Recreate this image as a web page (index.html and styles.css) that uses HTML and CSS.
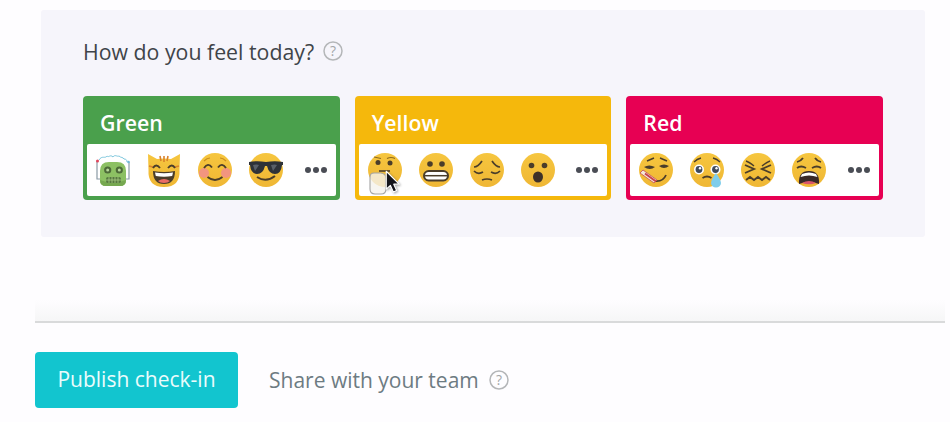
FILE: index.html
```html
<!DOCTYPE html>
<html lang="en">
<head>
<meta charset="utf-8">
<title>Check-in</title>
<link rel="stylesheet" href="styles.css">
</head>
<body>
<svg class="defs" aria-hidden="true"><defs><linearGradient id="face" x1="0" y1="0" x2="0" y2="1"><stop offset="0" stop-color="#f6c63f"/><stop offset="1" stop-color="#efb734"/></linearGradient></defs></svg>
<main class="page">
  <section class="panel">
    <div class="question">
      <span>How do you feel today?</span>
      <svg class="help" viewBox="0 0 20 20"><circle cx="10" cy="10" r="9"/><text x="10" y="15">?</text></svg>
    </div>
    <div class="cards">
      <article class="card green">
        <h2 class="card-title">Green</h2>
        <div class="emoji-row">
          <svg class="emoji" viewBox="0 0 34 34">
            <path d="M3 7C6 2 9 6 11 3c2 2 3-2 6 1 2-3 4 0 6-1 2 2 4 1 5 3 2 0 3 1 3 3" fill="none" stroke="#7cc7dd" stroke-width="1"/>
            <path d="M1 8v18h3M33 9v17h-3" fill="none" stroke="#8a9aa5" stroke-width="1.200"/>
            <circle cx="1.500" cy="8" r="1.500" fill="#e0455c"/><circle cx="32.500" cy="9" r="1.300" fill="#6fb8d8"/>
            <path d="M13 9h8q9 0 9 9v9q0 6-6 6H10q-6 0-6-6v-9q0-9 9-9z" fill="#8cc063"/>
            <path d="M4 27q13 5 26 0 0 6-6 6H10q-6 0-6-6z" fill="#76a850"/>
            <circle cx="11.700" cy="17" r="3.600" fill="#4d6a39"/><circle cx="11.700" cy="17" r="1.500" fill="#b8d79b"/>
            <circle cx="23.300" cy="17" r="3.600" fill="#4d6a39"/><circle cx="23.300" cy="17" r="1.500" fill="#b8d79b"/>
            <rect x="10" y="24" width="15" height="6" rx="2" fill="#56793f"/>
            <path d="M13 24v6M16 24v6M19 24v6M22 24v6M10 27h15" stroke="#a9cd86" stroke-width=".8"/>
          </svg>
          <svg class="emoji" viewBox="0 0 34 34">
            <path d="M1 1l9 5q7-1 14 0l9-5-.5 16q1 17-15.500 17T1.500 17z" fill="url(#face)"/>
            <path d="M13 3l1 5M17 3v6M21 3l-1 5M2 13l4 1M32 13l-4 1" stroke="#d9822b" stroke-width="1.600"/>
            <path d="M6 15q3-5 7 0M21 15q4-5 7 0" fill="none" stroke="#4a3d2a" stroke-width="1.900"/>
            <path d="M6 18q11 2 22 0 0 13-11 13T6 18z" fill="#4a3d2a"/>
            <path d="M8 19.500q9 1.500 18 0l-.8 3.500q-8.200 1.500-16.400 0z" fill="#fff"/>
            <path d="M11 28q6-4 12 0-2 2-6 2t-6-2z" fill="#ea6c63"/>
          </svg>
          <svg class="emoji" viewBox="0 0 34 34">
            <circle cx="17" cy="17" r="17" fill="url(#face)"/>
            <circle cx="6" cy="20" r="5" fill="#f2957f"/><circle cx="28" cy="20" r="5" fill="#f2957f"/>
            <path d="M6 15q4-6 8-.5M20 14.500q4-5.500 8 .5M9.500 24q7.500 6 15 0" fill="none" stroke="#4a3d2a" stroke-width="1.900"/>
            <path d="M6 8q3-3 6-3M22 5q3 0 6 3" fill="none" stroke="#c98e1f" stroke-width="1.100"/>
          </svg>
          <svg class="emoji" viewBox="0 0 34 34">
            <circle cx="17" cy="17" r="17" fill="url(#face)"/>
            <path d="M0 9q8-1.500 17 0 9-1.500 17 0v3h-1q-1 9-7 9-6 0-8-8h-2q-2 8-8 8-6 0-7-9H0z" fill="#2e3238"/>
            <path d="M4 12q4-1 6 0l-4 6zM22 12q4-1 6 0l-4 6z" fill="#5a6068"/>
            <path d="M8 24q9 6 18-1" fill="none" stroke="#4a3d2a" stroke-width="2"/>
          </svg>
          <div class="dots"><i></i><i></i><i></i></div>
        </div>
      </article>
      <article class="card yellow">
        <h2 class="card-title">Yellow</h2>
        <div class="emoji-row">
          <svg class="emoji" viewBox="0 0 34 34">
            <circle cx="17" cy="17" r="17" fill="url(#face)"/>
            <circle cx="10" cy="9.500" r="2.500" fill="#4a3d2a"/><circle cx="22" cy="10" r="2.500" fill="#4a3d2a"/>
            <path d="M6 4l7 1.500M19 5.500q4-2 8 0" fill="none" stroke="#8c6a20" stroke-width="1.200"/>
            <path d="M11 18h11" stroke="#4a3d2a" stroke-width="1.600"/>
            <path d="M2 24q0-4 4-4h7q5 1 5 5v11q0 5-5 5H7q-5 0-5-5z" fill="#f5f3ee" fill-opacity=".8" stroke="#a3a3a3" stroke-width="1.100"/>
          </svg>
          <svg class="emoji" viewBox="0 0 34 34">
            <circle cx="17" cy="17" r="17" fill="url(#face)"/>
            <circle cx="11" cy="11" r="2.800" fill="#4a3d2a"/><circle cx="23" cy="11" r="2.800" fill="#4a3d2a"/>
            <rect x="5" y="18" width="24" height="9.500" rx="4.700" fill="#fff" stroke="#4a3d2a" stroke-width="2"/>
            <path d="M6 22.700h22" stroke="#4a3d2a" stroke-width="1.500"/>
          </svg>
          <svg class="emoji" viewBox="0 0 34 34">
            <circle cx="17" cy="17" r="17" fill="url(#face)"/>
            <path d="M4 14q4 0 8-6M30 14q-4 0-8-6M4 18q4 4 9 1M21 19q5 3 9-1M12 27q5-2 10 0" fill="none" stroke="#4a3d2a" stroke-width="1.700"/>
          </svg>
          <svg class="emoji" viewBox="0 0 34 34">
            <circle cx="17" cy="17" r="17" fill="url(#face)"/>
            <circle cx="10.500" cy="12.500" r="2.800" fill="#4a3d2a"/><circle cx="23.500" cy="12.500" r="2.800" fill="#4a3d2a"/>
            <ellipse cx="17" cy="24" rx="5" ry="5.500" fill="#3e3128"/>
          </svg>
          <div class="dots"><i></i><i></i><i></i></div>
        </div>
      </article>
      <article class="card red">
        <h2 class="card-title">Red</h2>
        <div class="emoji-row">
          <svg class="emoji" viewBox="0 0 34 34">
            <circle cx="17" cy="17" r="17" fill="url(#face)"/>
            <path d="M8 8l7-3M21 5l7 3" fill="none" stroke="#4a3d2a" stroke-width="1.500"/>
            <path d="M5 14q5-3 11 0-5 4-11 0zM20 13q5-3 10 0-5 4-10 0z" fill="#4a3d2a"/>
            <path d="M16 28q8 1 11-6" fill="none" stroke="#4a3d2a" stroke-width="1.800"/>
            <path d="M1 20l3-3 14 10-3 3z" fill="#f4e8d8" stroke="#c85c58" stroke-width=".9"/>
            <path d="M6 20.500l11 8" stroke="#c83f4d" stroke-width="2"/>
          </svg>
          <svg class="emoji" viewBox="0 0 34 34">
            <circle cx="17" cy="17" r="17" fill="url(#face)"/>
            <path d="M4 9q3-3 7-4M23 5q4 1 7 4" fill="none" stroke="#4a3d2a" stroke-width="1.400"/>
            <circle cx="9" cy="16.500" r="5" fill="#fff"/><circle cx="25.500" cy="16.500" r="5" fill="#fff"/>
            <circle cx="9" cy="16.500" r="3.400" fill="#3f4a5c"/><circle cx="25.500" cy="16.500" r="3.400" fill="#3f4a5c"/>
            <circle cx="10" cy="15.300" r="1.200" fill="#fff"/><circle cx="26.500" cy="15.300" r="1.200" fill="#fff"/>
            <path d="M12.500 25q4.500-3 9 0" fill="none" stroke="#4a3d2a" stroke-width="1.800"/>
            <path d="M26 20q5 7 5 10a5 4.500 0 0 1-10 0q0-3 5-10z" fill="#7fcdeb"/>
          </svg>
          <svg class="emoji" viewBox="0 0 34 34">
            <circle cx="17" cy="17" r="17" fill="url(#face)"/>
            <path d="M5 8q3 1 8 5M29 8q-3 1-8 5" fill="none" stroke="#4a3d2a" stroke-width="1.500"/>
            <path d="M4 12l9 4-9 4M30 12l-9 4 9 4M5 27l4-3 4 3 4-3 4 3 4-3 4 3" fill="none" stroke="#4a3d2a" stroke-width="1.900"/>
          </svg>
          <svg class="emoji" viewBox="0 0 34 34">
            <circle cx="17" cy="17" r="17" fill="url(#face)"/>
            <path d="M5 9q4-1 6-4M29 9q-4-1-6-4M5 15q4-3 9 0M20 15q5-3 9 0" fill="none" stroke="#4a3d2a" stroke-width="1.800"/>
            <path d="M7 31q-1-13 10-13 11 0 10 13-10-4-20 0z" fill="#3a2a28"/>
            <path d="M10 21q7-3 14 0l1.500 3q-8.500-3-17 0z" fill="#fff"/>
            <path d="M10 30q7-4 14 0-7 2.500-14 0z" fill="#d9566a"/>
          </svg>
          <div class="dots"><i></i><i></i><i></i></div>
        </div>
      </article>
    </div>
    <svg class="cursor" viewBox="0 0 18 30"><path d="M1.500 1.500v21.500l5-4.500 3.500 8 4-1.800-3.500-7.700h6.500z" fill="#14141a" stroke="#fff" stroke-width="1.400" stroke-linejoin="round"/></svg>
  </section>
  <div class="rule"></div>
  <footer class="actions">
    <button class="publish" type="button">Publish check-in</button>
    <span class="share">Share with your team</span>
    <svg class="help" viewBox="0 0 20 20"><circle cx="10" cy="10" r="9"/><text x="10" y="15">?</text></svg>
  </footer>
</main>
</body>
</html>
```
FILE: styles.css
```css
* { box-sizing: border-box; }
html, body { margin: 0; padding: 0; }
body { background: #fefdff; font-family: "Open Sans", sans-serif; }
.defs { position: absolute; width: 0; height: 0; }
.page { width: 950px; height: 422px; overflow: hidden; padding-top: 10px; }
.panel {
  position: relative;
  width: 884px;
  height: 227px;
  margin-left: 41px;
  padding: 27px 42px 0;
  background: #f6f5fb;
  border-radius: 3px;
}
.question { display: flex; align-items: center; gap: 9px; height: 28px; font-size: 21.3px; color: #3f4449; }
.help { width: 20px; height: 20px; flex: none; }
.help circle { fill: none; stroke: #b4b6b8; stroke-width: 1.500; }
.help text { font-family: "Open Sans", sans-serif; font-size: 14px; fill: #a3a6a8; text-anchor: middle; }
.cards { display: flex; gap: 15px; margin-top: 31px; }
.card { flex: 1; height: 104px; padding: 0 4px 4px; border-radius: 4px; }
.green { background: #4aa04c; }
.yellow { background: #f5b80c; }
.red { background: #e70053; }
.card-title { margin: 0; height: 48px; padding-left: 13px; font-size: 21.3px; font-weight: 600; line-height: 54px; color: #fff; }
.emoji-row { display: flex; align-items: center; gap: 17px; height: 52px; padding: 0 9px; background: #fff; border-radius: 2px; }
.emoji { width: 34px; height: 34px; flex: none; overflow: visible; }
.dots { display: flex; gap: 2px; margin-left: auto; }
.dots i { width: 6px; height: 6px; border-radius: 50%; background: #4a4d55; }
.cursor { position: absolute; left: 344px; top: 160px; width: 15px; height: 25px; filter: drop-shadow(1px 1px 1px rgba(0, 0, 0, .35)); }
.rule {
  width: 910px;
  height: 23px;
  margin: 63px 0 0 35px;
  background: linear-gradient(#fefdff, #f6f6f7);
  border-bottom: 2px solid #d9dadb;
}
.actions { display: flex; align-items: center; height: 56px; margin: 29px 0 0 35px; }
.publish {
  width: 203px;
  height: 56px;
  margin-right: 31px;
  padding: 0 0 2px;
  border: 0;
  border-radius: 4px;
  background: #12c5cf;
  color: #eafcfc;
  font: 21px "Open Sans", sans-serif;
}
.share { margin-right: 10px; font-size: 21px; color: #6d7b82; }
```
